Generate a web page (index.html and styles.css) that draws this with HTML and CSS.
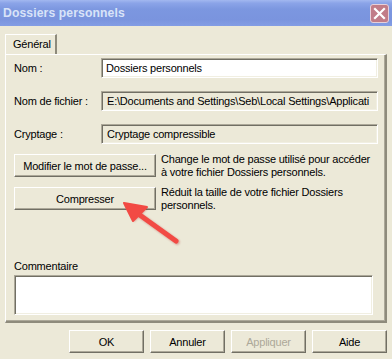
FILE: index.html
```html
<!DOCTYPE html>
<html lang="fr">
<head>
<meta charset="utf-8">
<title>Dossiers personnels</title>
<link rel="stylesheet" href="styles.css">
</head>
<body>
<div class="window">
  <div class="titlebar">
    <span class="title">Dossiers personnels</span>
    <span class="close">
      <svg width="13" height="13" viewBox="0 0 13 13"><path d="M2 2 L11 11 M11 2 L2 11" stroke="#fff" stroke-width="2.2" stroke-linecap="square"/></svg>
    </span>
  </div>
  <div class="content">
    <div class="tabs"><span class="tab">Général</span></div>
    <div class="panel">
      <div class="fields">
        <span class="label">Nom :</span>
        <div class="field white">Dossiers personnels</div>
        <span class="label">Nom de fichier :</span>
        <div class="field">E:\Documents and Settings\Seb\Local Settings\Applicati</div>
        <span class="label">Cryptage :</span>
        <div class="field">Cryptage compressible</div>
      </div>
      <div class="action">
        <div class="btn wide">Modifier le mot de passe...</div>
        <p class="desc">Change le mot de passe utilisé pour accéder à votre fichier Dossiers personnels.</p>
      </div>
      <div class="action">
        <div class="btn wide">Compresser</div>
        <p class="desc">Réduit la taille de votre fichier Dossiers personnels.</p>
      </div>
      <div class="comment">
        <span class="label">Commentaire</span>
        <div class="area"></div>
      </div>
    </div>
    <div class="buttons">
      <div class="btn">OK</div>
      <div class="btn">Annuler</div>
      <div class="btn disabled">Appliquer</div>
      <div class="btn">Aide</div>
    </div>
  </div>
  <svg class="arrow" width="80" height="60" viewBox="0 0 80 60">
    <defs>
      <filter id="sh" x="-20%" y="-20%" width="140%" height="140%"><feGaussianBlur stdDeviation="1"/></filter>
    </defs>
    <g filter="url(#sh)" opacity="0.35" transform="translate(1,1)">
      <path d="M56 42 L17 14" stroke="#a00" stroke-width="5" stroke-linecap="round"/>
      <path d="M4 4 L27 8 L13 22 Z" fill="#a00"/>
    </g>
    <path d="M56 42 L17 14" stroke="#f24a44" stroke-width="5" stroke-linecap="round"/>
    <path d="M4 4 L27 8 L13 22 Z" fill="#f24a44" stroke="#f24a44" stroke-width="2" stroke-linejoin="round"/>
  </svg>
</div>
</body>
</html>
```
FILE: styles.css
```css
html, body {
  margin: 0;
  padding: 0;
}
body {
  width: 392px;
  height: 359px;
  overflow: hidden;
  background: #ece9d8;
  font-family: "Liberation Sans", Arial, sans-serif;
  font-size: 11px;
  letter-spacing: -0.2px;
  color: #000;
}
.window {
  position: relative;
  width: 392px;
  height: 359px;
}
.titlebar {
  height: 26px;
  display: flex;
  align-items: center;
  justify-content: space-between;
  padding: 0 2px 0 3px;
  box-sizing: border-box;
  background: linear-gradient(#a2b8f0 0%, #8ba4e8 12%, #7c97e0 35%, #7a94de 75%, #839de4 100%);
}
.title {
  color: #d8e3f8;
  font-weight: bold;
  font-size: 12.2px;
  letter-spacing: 0.1px;
}
.close {
  width: 17px;
  height: 17px;
  border: 1px solid #e6d0da;
  border-radius: 3px;
  background: #c17c88;
  display: flex;
  align-items: center;
  justify-content: center;
  margin-right: 1px;
}
.content {
  padding: 8px 5px 0 5px;
}
.tabs {
  display: flex;
  height: 20px;
}
.tab {
  width: 52px;
  height: 20px;
  box-sizing: border-box;
  border-left: 1px solid #fff;
  border-top: 1px solid #fff;
  border-right: 2px solid #8e8b7c;
  padding: 3px 0 0 7px;
  background: #ece9d8;
  position: relative;
  z-index: 1;
}
.panel {
  height: 269px;
  box-sizing: border-box;
  border-top: 1px solid #fff;
  border-left: 1px solid #fff;
  border-right: 2px solid #8e8b7c;
  border-bottom: 2px solid #8e8b7c;
  box-shadow: inset -1px -1px 0 #aca899;
  padding: 3px 0 0 8px;
  width: 382px;
}
.fields {
  display: grid;
  grid-template-columns: 87px 277px;
  row-gap: 13px;
  align-items: center;
}
.label {
  white-space: nowrap;
}
.field {
  height: 20px;
  box-sizing: border-box;
  border-top: 1px solid #aca899;
  border-left: 1px solid #aca899;
  border-right: 1px solid #fff;
  border-bottom: 1px solid #fff;
  box-shadow: inset 1px 1px 0 #716f64, inset -1px -1px 0 #f1efe2;
  padding: 3px 2px 0 5px;
  white-space: nowrap;
  overflow: hidden;
}
.field.white {
  background: #fff;
  padding-left: 4px;
}
.action {
  display: flex;
  gap: 5px;
  margin-top: 10px;
  height: 23px;
}
.btn {
  width: 75px;
  height: 23px;
  box-sizing: border-box;
  border-top: 1px solid #fff;
  border-left: 1px solid #fff;
  border-right: 1px solid #716f64;
  border-bottom: 1px solid #716f64;
  box-shadow: inset -1px -1px 0 #aca899;
  display: flex;
  align-items: center;
  justify-content: center;
  background: #ece9d8;
  flex-shrink: 0;
  white-space: nowrap;
}
.btn.wide {
  width: 142px;
}
.btn.disabled {
  color: #aca899;
}
.desc {
  margin: -1px 0 0 0;
  width: 212px;
  line-height: 13px;
}
.comment {
  margin-top: 50px;
  display: flex;
  flex-direction: column;
  gap: 3px;
}
.area {
  width: 359px;
  height: 40px;
  box-sizing: border-box;
  background: #fff;
  border-top: 1px solid #aca899;
  border-left: 1px solid #aca899;
  border-right: 1px solid #fff;
  border-bottom: 1px solid #fff;
  box-shadow: inset 1px 1px 0 #716f64, inset -1px -1px 0 #f1efe2;
}
.buttons {
  display: flex;
  justify-content: flex-end;
  gap: 6px;
  margin-top: 7px;
}
.arrow {
  position: absolute;
  left: 120px;
  top: 199px;
}
```
